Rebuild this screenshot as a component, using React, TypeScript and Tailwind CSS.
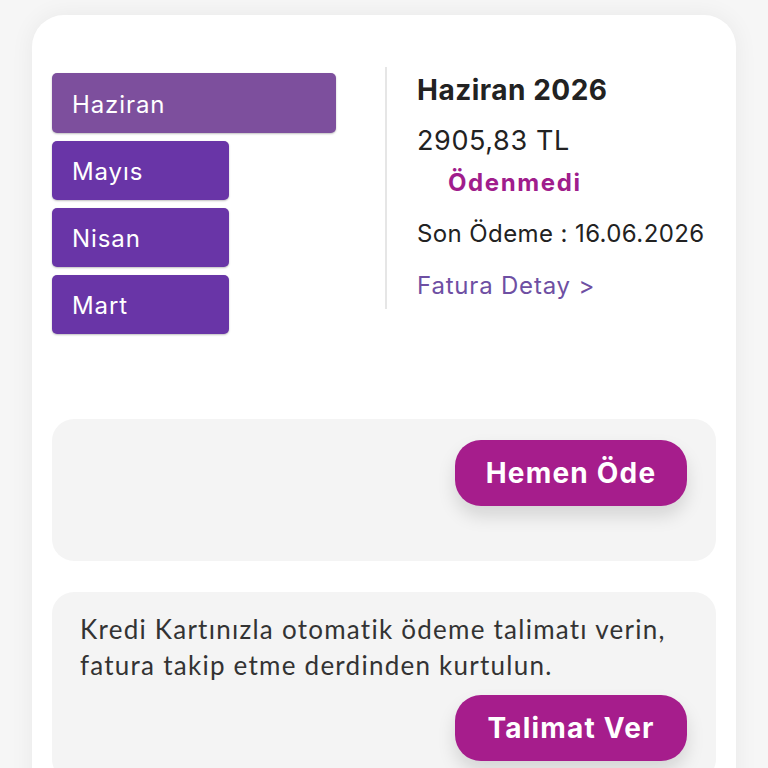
import { useState } from "react";

const months = ["Haziran", "Mayıs", "Nisan", "Mart"];

export default function App() {
  const [active, setActive] = useState(0);

  return (
    <div className="min-h-screen bg-[#f6f6f6] px-[32px] pt-[15px] font-['Inter',sans-serif]">
      <div className="h-[800px] rounded-t-[32px] bg-white px-[20px] pt-[58px] shadow-[0_0_24px_rgba(0,0,0,0.06)]">
        <div className="flex h-[300px]">
          <div className="flex w-[333px] flex-col gap-[8px]">
            {months.map((m, i) => (
              <button
                key={m}
                onClick={() => setActive(i)}
                className={
                  i === active
                    ? "flex h-[60px] w-[284px] items-center rounded-[5px] bg-[#7d4f9d] pl-[20px] pt-[3px] text-left text-[24px] tracking-[0.9px] text-white shadow-[0_1px_2px_rgba(0,0,0,0.25)]"
                    : "flex h-[59px] w-[177px] items-center rounded-[5px] bg-[#6935a7] pl-[20px] pt-[3px] text-left text-[24px] tracking-[0.9px] text-white shadow-[0_1px_2px_rgba(0,0,0,0.25)]"
                }
              >
                {m}
              </button>
            ))}
          </div>
          <div className="mt-[-6px] h-[242px] w-[2px] bg-[#e6e6e6]" />
          <div className="flex flex-col pl-[30px] pt-[1px]">
            <div className="text-[28px] font-bold leading-[32px] tracking-[0.5px] text-[#222222]">
              Haziran 2026
            </div>
            <div className="mt-[20px] text-[27px] leading-[30px] tracking-[0.6px] text-[#222222]">2905,83 TL</div>
            <div className="mt-[13px] pl-[31px] text-[24px] font-bold leading-[28px] tracking-[1.6px] text-[#a01d8c]">
              Ödenmedi
            </div>
            <div className="mt-[22px] text-[24px] leading-[30px] tracking-[0.4px] text-[#222222]">
              Son Ödeme : 16.06.2026
            </div>
            <a className="mt-[22px] cursor-pointer text-[24px] leading-[30px] tracking-[0.8px] text-[#6e4fa3]">
              Fatura Detay &gt;
            </a>
          </div>
        </div>

        <div className="mt-[46px] flex h-[142px] justify-end rounded-[22px] bg-[#f4f4f4] pr-[29px] pt-[21px]">
          <button className="h-[66px] w-[232px] rounded-[26px] bg-[#a61d8c] text-[28px] font-bold tracking-[1.2px] text-white shadow-[0_10px_18px_rgba(0,0,0,0.13)]">
            Hemen Öde
          </button>
        </div>

        <div className="mt-[31px] rounded-[22px] bg-[#f4f4f4] pb-[20px] pl-[28px] pr-[29px] pt-[19px]">
          <p className="font-['Lato',sans-serif] text-[26px] leading-[36px] tracking-[1.25px] text-[#333333]">
            Kredi Kartınızla otomatik ödeme talimatı verin,
            <br />
            fatura takip etme derdinden kurtulun.
          </p>
          <div className="mt-[12px] flex justify-end">
            <button className="h-[66px] w-[232px] rounded-[26px] bg-[#a61d8c] text-[28px] font-bold tracking-[1.2px] text-white shadow-[0_10px_18px_rgba(0,0,0,0.13)]">
              Talimat Ver
            </button>
          </div>
        </div>
      </div>
    </div>
  );
}
